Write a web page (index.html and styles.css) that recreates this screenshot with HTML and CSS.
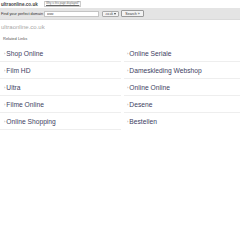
FILE: index.html
```html
<!DOCTYPE html>
<html lang="en">
<head>
  <meta charset="UTF-8" />
  <title>ultraonline.co.uk</title>
  <link rel="stylesheet" href="styles.css">
</head>
<body>
  <div class="topline">
    <span class="site">ultraonline.co.uk</span>
    <a class="why" href="#">Why is this page displayed?</a>
  </div>

  <form class="searchbar">
    <label for="domain">Find your perfect domain</label>
    <input type="text" id="domain" value="www">
    <span class="tld-wrap">
      <select class="tld">
        <option>.co.uk</option>
      </select>
    </span>
    <button type="submit">Search &raquo;</button>
  </form>

  <div class="content">
    <div class="domain">ultraonline.co.uk</div>
    <div class="related">Related Links</div>

    <div class="links">
      <a href="#"><span class="dot">&rsaquo;</span>Shop Online</a>
      <a href="#"><span class="dot">&rsaquo;</span>Online Seriale</a>
      <a href="#"><span class="dot">&rsaquo;</span>Film HD</a>
      <a href="#"><span class="dot">&rsaquo;</span>Dameskleding Webshop</a>
      <a href="#"><span class="dot">&rsaquo;</span>Ultra</a>
      <a href="#"><span class="dot">&rsaquo;</span>Online Online</a>
      <a href="#"><span class="dot">&rsaquo;</span>Filme Online</a>
      <a href="#"><span class="dot">&rsaquo;</span>Desene</a>
      <a href="#"><span class="dot">&rsaquo;</span>Online Shopping</a>
      <a href="#"><span class="dot">&rsaquo;</span>Bestellen</a>
    </div>
  </div>
</body>
</html>
```

FILE: styles.css
```css
body {
  margin: 0;
  font-family: 'Liberation Sans', Arial, sans-serif;
  background: #fff;
}

.topline {
  display: flex;
  align-items: center;
  height: 8px;
  padding-left: 1px;
}

.site {
  width: 43px;
  font-size: 4.6px;
  font-weight: bold;
  color: #444;
}

.why {
  padding: 0 1px;
  border: 1px solid #ccc;
  font-size: 2.7px;
  line-height: 4px;
  color: #666;
  text-decoration: underline;
}

.searchbar {
  display: flex;
  align-items: center;
  height: 11px;
  margin: 0;
  padding-left: 1px;
  background: #e4e4e4;
  border-bottom: 1px solid #dadada;
}

.searchbar label {
  flex: none;
  width: 43px;
  font-size: 3.8px;
  color: #333;
}

.searchbar input {
  width: 55px;
  height: 6px;
  box-sizing: border-box;
  margin: 0;
  padding: 0 2px;
  border: 1px solid #c4c4c4;
  background: #fff;
  font-size: 3px;
  font-family: inherit;
  color: #444;
}

.tld-wrap {
  position: relative;
  margin-left: 3px;
}

.tld-wrap::after {
  content: "";
  position: absolute;
  right: 3px;
  top: 2px;
  border-left: 1px solid transparent;
  border-right: 1px solid transparent;
  border-top: 2px solid #444;
}

.tld {
  display: block;
  appearance: none;
  width: 17px;
  height: 6px;
  margin: 0;
  padding: 0 0 0 2px;
  border: 1px solid #aaa;
  border-radius: 1px;
  background: #f4f4f4;
  font-size: 3px;
  font-family: inherit;
  color: #333;
}

.searchbar button {
  width: 23px;
  height: 7px;
  margin: 0 0 0 2px;
  padding: 0;
  border: 1px solid #9a9a9a;
  border-radius: 1px;
  background: #f3f3f3;
  font-size: 3.6px;
  font-family: inherit;
  color: #333;
}

.domain {
  margin-top: 1px;
  padding-left: 1px;
  height: 12px;
  line-height: 12px;
  font-size: 6px;
  color: #a8a8a8;
}

.related {
  margin-top: 1px;
  padding-left: 3px;
  height: 10px;
  line-height: 10px;
  font-size: 4px;
  color: #555;
}

.links {
  display: grid;
  grid-template-columns: 121px 1fr;
  column-gap: 3px;
  margin-top: 1px;
}

.links a {
  display: flex;
  align-items: center;
  height: 16px;
  padding-left: 4px;
  border-bottom: 1px solid #eeeeee;
  font-size: 6.7px;
  color: #3e3e62;
  text-decoration: none;
}

.links a:nth-child(even) {
  padding-left: 3px;
}

.links a:last-child {
  border-bottom: none;
}

.dot {
  margin-right: 1px;
  font-size: 4px;
  color: #888;
}
```
